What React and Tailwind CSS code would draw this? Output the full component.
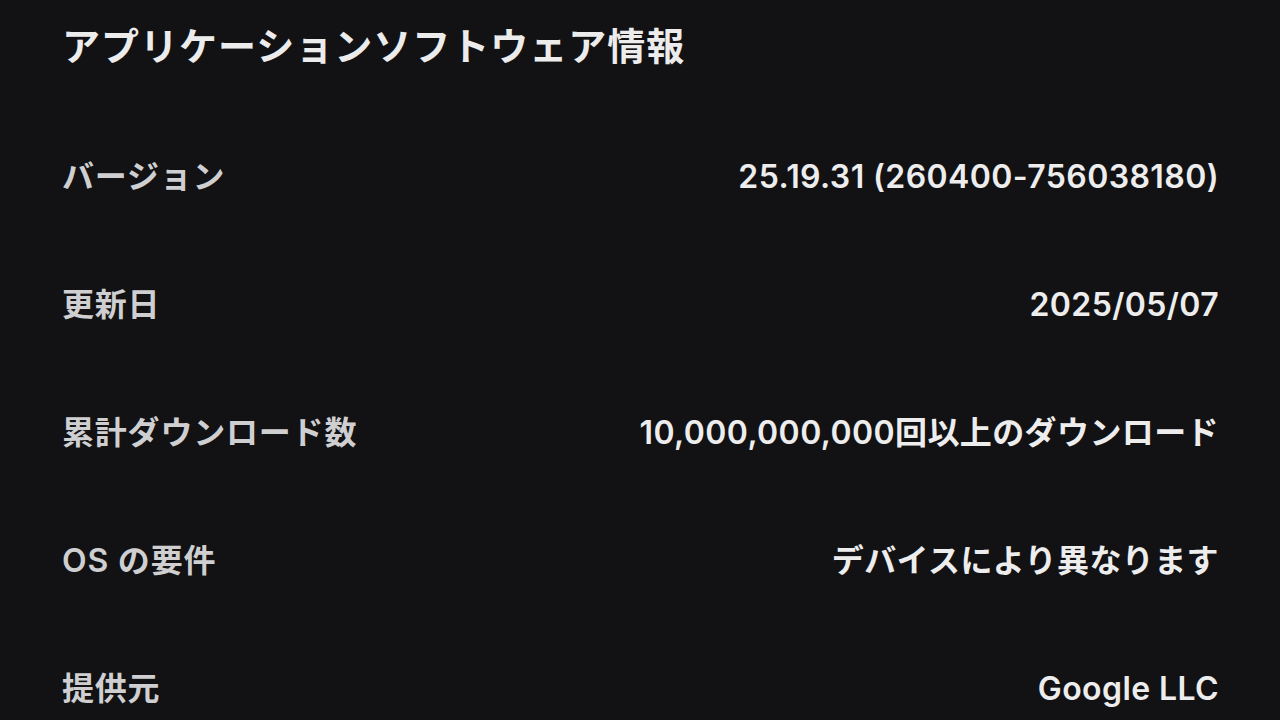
const rows = [
  { label: "バージョン", value: "25.19.31 (260400-756038180)" },
  { label: "更新日", value: "2025/05/07" },
  { label: "累計ダウンロード数", value: "10,000,000,000回以上のダウンロード" },
  { label: "OS の要件", value: "デバイスにより異なります" },
  { label: "提供元", value: "Google LLC" },
];

export default function App() {
  return (
    <div
      className="h-[720px] w-[1280px] overflow-hidden bg-[#121214] pl-[62px] pr-[61px]"
      style={{ fontFamily: '"Inter", "Noto Sans CJK JP", sans-serif' }}
    >
      <div className="flex h-[92px] items-center">
        <h1 className="text-[38px] font-semibold tracking-[1px] text-[#ececec]">
          アプリケーションソフトウェア情報
        </h1>
      </div>
      <div className="mt-[21px]">
        {rows.map((r) => (
          <div key={r.label} className="flex h-[128px] items-center justify-between">
            <span className="text-[32px] font-semibold tracking-[0.8px] text-[#cfcfd1]">{r.label}</span>
            <span className="text-[32px] font-semibold tracking-[0.4px] text-[#ededed]">{r.value}</span>
          </div>
        ))}
      </div>
    </div>
  );
}
